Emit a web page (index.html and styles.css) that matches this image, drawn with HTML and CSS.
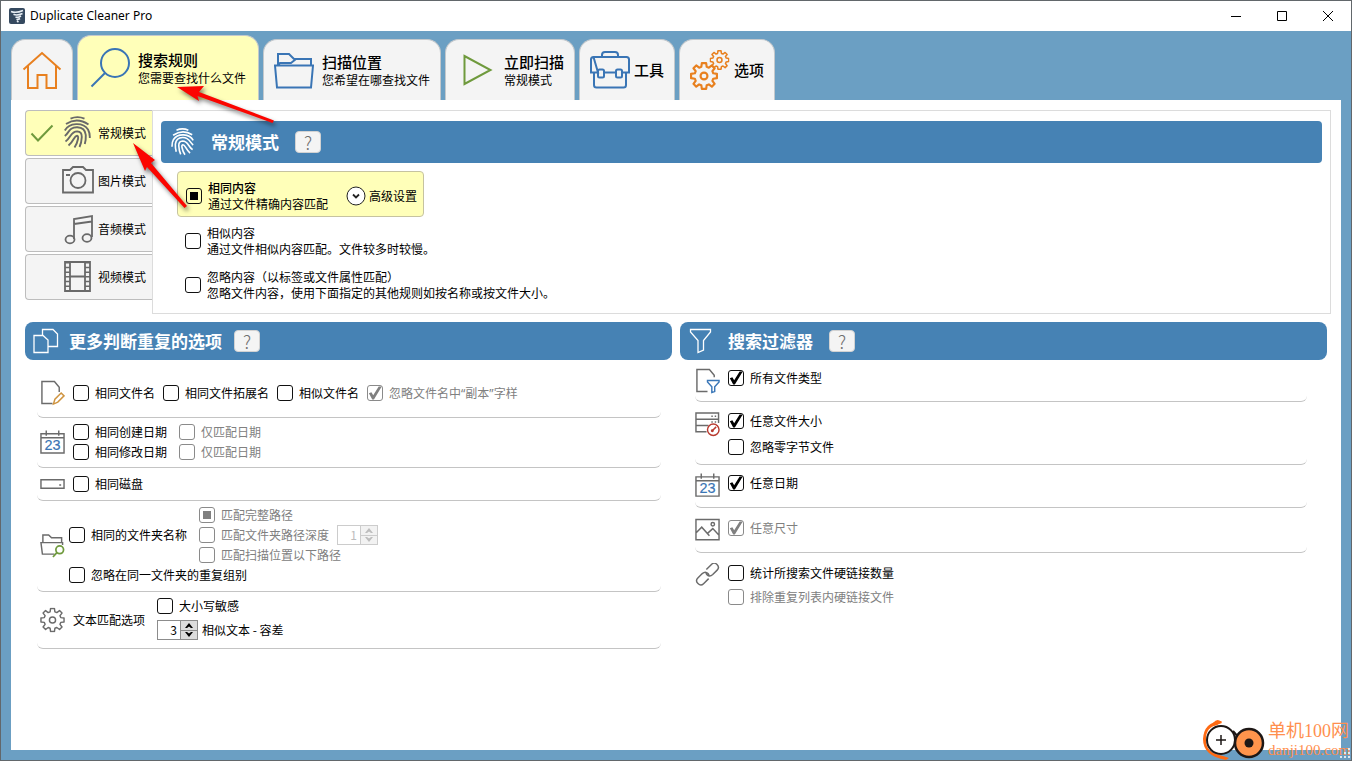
FILE: index.html
```html
<!DOCTYPE html>
<html lang="zh-CN">
<head>
<meta charset="utf-8">
<title>Duplicate Cleaner Pro</title>
<link rel="stylesheet" href="styles.css">
</head>
<body>
<svg class="defs" aria-hidden="true">
  <symbol id="print" viewBox="0 0 28 33">
    <g fill="none" stroke="currentColor" stroke-width="1.900">
      <path d="M6.500 2.600Q13.500 -.4 20.500 2.600"/>
      <path d="M2 8Q13 .8 24.500 8.500"/>
      <path d="M.8 14.500C5 6.500 19 5.800 24 13.500Q26 17 25.800 22"/>
      <path d="M.8 20C5 17 5 11 13.300 11.200Q21 11.500 21.800 19Q22 24 20.800 28"/>
      <path d="M1.500 25.500C7 22 6.500 15.500 13.200 15.400Q18 15.700 17.800 21Q17.500 27 15.500 31"/>
      <path d="M4.500 29.500C10 25 10 19.800 13 19.700Q14.600 20 14 23Q13 28 10.500 31.500"/>
    </g>
  </symbol>
  <symbol id="gear" viewBox="0 0 26 26">
    <path fill="none" stroke="currentColor" stroke-linejoin="round" d="M10.500 4.500L11 1H15L15.500 4.500L17.500 5.300L20.300 3.200L22.900 5.800L20.800 8.500L21.600 10.500L25 11V15L21.600 15.500L20.800 17.500L22.900 20.300L20.300 22.900L17.500 20.800L15.500 21.600L15 25H11L10.500 21.600L8.500 20.800L5.800 22.900L3.200 20.300L5.300 17.500L4.500 15.500L1 15V11L4.500 10.500L5.300 8.500L3.200 5.800L5.800 3.200L8.500 5.300Z"/>
    <circle cx="13" cy="13" r="3.200" fill="none" stroke="currentColor"/>
  </symbol>
  <symbol id="arrow" viewBox="0 0 8 5"><path d="M0 5L4 0L8 5L6 5L4 3.500L2 5Z" fill="currentColor"/></symbol>
</svg>

<header class="titlebar">
  <svg class="app-icon" viewBox="0 0 16 16" aria-hidden="true">
    <rect width="16" height="16" rx="2" fill="#35495f"/>
    <path d="M2 3.500Q7 5.500 14 2.500M4.500 6.300Q8 8 13.500 5.500M6.500 9Q9 10 12 8M7.500 11.200Q9 12 11 10.500M8 13L9.500 14" fill="none" stroke="#e8eef4" stroke-width="1.600"/>
  </svg>
  <h1>Duplicate Cleaner Pro</h1>
  <div class="window-buttons">
    <button type="button" aria-label="最小化"><svg viewBox="0 0 12 12"><path d="M1 6.500H11"/></svg></button>
    <button type="button" aria-label="最大化"><svg viewBox="0 0 12 12"><path d="M1.500 1.500H10.500V10.500H1.500Z"/></svg></button>
    <button type="button" aria-label="关闭"><svg viewBox="0 0 12 12"><path d="M1 1L11 11M11 1L1 11"/></svg></button>
  </div>
</header>

<nav class="tabs">
  <button type="button" class="tab home" aria-label="主页">
    <svg class="tab-icon orange" viewBox="0 0 40 40"><path d="M1.500 19.500L20 3L38.500 19.500M6 16V38H15.500V25H24.500V38H34V16"/></svg>
  </button>
  <button type="button" class="tab active">
    <svg class="tab-icon blue" viewBox="0 0 40 40"><circle cx="25" cy="15" r="14"/><path d="M15 25L1.500 38.500"/></svg>
    <span class="tab-text"><strong>搜索规则</strong><span>您需要查找什么文件</span></span>
  </button>
  <button type="button" class="tab">
    <svg class="tab-icon blue" viewBox="0 0 40 40"><path d="M1 15.500H39L37 37.500H3ZM4 15.500V4H15L20 9H37V15.500M4 15.500L6 13H17L22 9"/></svg>
    <span class="tab-text"><strong>扫描位置</strong><span>您希望在哪查找文件</span></span>
  </button>
  <button type="button" class="tab">
    <svg class="tab-icon green" viewBox="0 0 40 40"><path d="M8.500 6V34L34.500 20Z"/></svg>
    <span class="tab-text"><strong>立即扫描</strong><span>常规模式</span></span>
  </button>
  <button type="button" class="tab compact">
    <svg class="tab-icon blue" viewBox="0 0 40 40"><path d="M12 7V5Q12 2 15 2H25Q28 2 28 5V7M3.500 7H36.500Q39 7 39 9.500V22.500H32M25.500 22.500H14.500M8 22.500H1V9.500Q1 7 3.500 7ZM4 22.500V35Q4 37.500 6.500 37.500H33.500Q36 37.500 36 35V22.500"/><rect x="8" y="19.500" width="6" height="8" rx="1.500"/><rect x="26" y="19.500" width="6" height="8" rx="1.500"/></svg>
    <strong>工具</strong>
  </button>
  <button type="button" class="tab compact">
    <svg class="tab-icon orange" viewBox="0 0 40 40"><use href="#gear" x="0" y="12" width="28" height="28"/><use href="#gear" x="19.500" y="0" width="20" height="20"/></svg>
    <strong>选项</strong>
  </button>
</nav>

<main class="content">
  <section class="modes">
    <div class="mode-list">
      <button type="button" class="mode active">
        <svg class="tick" viewBox="0 0 24 18" aria-hidden="true"><path d="M1.500 9.500L8 16.500L22.500 1.500"/></svg>
        <svg class="mode-icon" viewBox="0 0 32 34"><use href="#print" x="2" width="28" height="33"/></svg>
        <span>常规模式</span>
      </button>
      <button type="button" class="mode">
        <svg class="mode-icon line" viewBox="0 0 32 34"><path d="M1 6H8L11 3H21L24 6H31V28.500H1ZM4 11H8"/><circle cx="16" cy="16.500" r="7.500"/></svg>
        <span>图片模式</span>
      </button>
      <button type="button" class="mode">
        <svg class="mode-icon line" viewBox="0 0 32 34"><path d="M12 27V7L30 4V25M12 12L30 9.500"/><ellipse cx="8" cy="27.500" rx="4.500" ry="3.800"/><ellipse cx="25" cy="26" rx="4.500" ry="3.800"/></svg>
        <span>音频模式</span>
      </button>
      <button type="button" class="mode">
        <svg class="mode-icon line" viewBox="0 0 32 34"><path d="M3 2H28V31H3ZM8 2V31M23 2V31M8 16.500H23"/><path stroke-width="5" stroke-dasharray="1.500 3.200" d="M5.500 2V31M25.500 2V31"/></svg>
        <span>视频模式</span>
      </button>
    </div>
    <div class="mode-panel">
      <div class="bar mode-bar">
        <svg class="bar-icon mirrored" viewBox="0 0 28 33"><use href="#print" width="28" height="33"/></svg>
        <h2>常规模式</h2>
        <button type="button" class="help" aria-label="帮助">?</button>
      </div>
      <div class="match-options">
        <div class="match selected">
          <label class="match-label"><input type="checkbox" class="square"><span><b>相同内容</b><br>通过文件精确内容匹配</span></label>
          <button type="button" class="advanced"><svg viewBox="0 0 20 20" aria-hidden="true"><circle cx="10" cy="10" r="9" fill="#fff" stroke="#222"/><path d="M7 8.500L10 11.500L13 8.500" fill="none" stroke="#222" stroke-width="1.800"/></svg>高级设置</button>
        </div>
        <label class="match match-label"><input type="checkbox"><span>相似内容<br>通过文件相似内容匹配。文件较多时较慢。</span></label>
        <label class="match match-label"><input type="checkbox"><span>忽略内容（以标签或文件属性匹配）<br>忽略文件内容，使用下面指定的其他规则如按名称或按文件大小。</span></label>
      </div>
    </div>
  </section>

  <div class="columns">
    <section class="criteria">
      <div class="bar">
        <svg class="bar-icon" viewBox="0 0 26 26"><path d="M1 7.500H10L15 12V24.500H1ZM9.500 7V1.500H20L24.500 6V18.500H15.500"/></svg>
        <h2>更多判断重复的选项</h2>
        <button type="button" class="help" aria-label="帮助">?</button>
      </div>
      <div class="group names">
        <svg class="row-icon" viewBox="0 0 26 26"><path d="M20 12V7L15 1H2V24H13"/><path d="M14 24.500L15.500 19.500L22 13L25 16L18.500 22.500Z" stroke="#cf9440"/></svg>
        <label><input type="checkbox">相同文件名</label>
        <label><input type="checkbox">相同文件拓展名</label>
        <label><input type="checkbox">相似文件名</label>
        <label><input type="checkbox" checked disabled><span>忽略文件名中<span class="quoted">“副本”</span>字样</span></label>
      </div>
      <div class="group dates">
        <svg class="row-icon" viewBox="0 0 26 26"><path d="M1 4.500H25V24.500H1ZM1 8.500H25M6.500 1V6.500M19.500 1V6.500"/><text x="13" y="21" text-anchor="middle" class="cal-num">23</text></svg>
        <div class="date-grid">
          <label><input type="checkbox">相同创建日期</label>
          <label><input type="checkbox" disabled>仅匹配日期</label>
          <label><input type="checkbox">相同修改日期</label>
          <label><input type="checkbox" disabled>仅匹配日期</label>
        </div>
      </div>
      <div class="group disk">
        <svg class="row-icon flat" viewBox="0 0 26 20"><path d="M1 5.500H25V14.500H1ZM20 11H22"/></svg>
        <label><input type="checkbox">相同磁盘</label>
      </div>
      <div class="group folders">
        <svg class="row-icon" viewBox="0 0 26 26"><path d="M15 22.500H2.500L1 10.500H23.500V13M3 10.500V2.500H9L12 5.500H22.500V10.500"/><g stroke="#6f9a3d" stroke-width="1.800"><circle cx="20.500" cy="18" r="4"/><path d="M17.500 21L13.500 25.500"/></g></svg>
        <div class="stack">
          <div class="folder-line">
            <label><input type="checkbox">相同的文件夹名称</label>
            <div class="stack">
              <label><input type="checkbox" class="square" disabled>匹配完整路径</label>
              <div class="inline">
                <label><input type="checkbox" disabled>匹配文件夹路径深度</label>
                <span class="spinner off">
                  <input type="text" value="1" aria-label="路径深度" disabled>
                  <span class="steps"><button type="button" aria-label="增加" disabled><svg viewBox="0 0 8 5"><use href="#arrow" width="8" height="5"/></svg></button><button type="button" class="down" aria-label="减少" disabled><svg viewBox="0 0 8 5"><use href="#arrow" width="8" height="5"/></svg></button></span>
                </span>
              </div>
              <label><input type="checkbox" disabled>匹配扫描位置以下路径</label>
            </div>
          </div>
          <label><input type="checkbox">忽略在同一文件夹的重复组别</label>
        </div>
      </div>
      <div class="group texts">
        <svg class="row-icon" viewBox="0 0 26 26"><use href="#gear" width="26" height="26"/></svg>
        <span class="caption">文本匹配选项</span>
        <div class="stack spaced">
          <label><input type="checkbox">大小写敏感</label>
          <div class="inline near">
            <span class="spinner">
              <input type="text" value="3" id="tolerance">
              <span class="steps"><button type="button" aria-label="增加"><svg viewBox="0 0 8 5"><use href="#arrow" width="8" height="5"/></svg></button><button type="button" class="down" aria-label="减少"><svg viewBox="0 0 8 5"><use href="#arrow" width="8" height="5"/></svg></button></span>
            </span>
            <label for="tolerance">相似文本 - 容差</label>
          </div>
        </div>
      </div>
    </section>

    <section class="filters">
      <div class="bar">
        <svg class="bar-icon" viewBox="0 0 26 26"><path d="M2.500 1.500H22.500V4L15.500 12.500V22L10 24.500V12.500L2.500 4Z"/></svg>
        <h2>搜索过滤器</h2>
        <button type="button" class="help" aria-label="帮助">?</button>
      </div>
      <div class="group types">
        <svg class="row-icon" viewBox="0 0 26 26"><path d="M20 9V7L15 1H2V24H13"/><path d="M13 12.500H25V14L20.500 19V24L17.500 25V19L13 14Z" stroke="#3a77b8"/></svg>
        <label><input type="checkbox" checked>所有文件类型</label>
      </div>
      <div class="group sizes">
        <svg class="row-icon" viewBox="0 0 26 26"><path d="M12 21H1V1.500H24.500V12M1 8H24.500M1 14.500H14M17 5H18.500M20.500 5H22M17 11H18.500M20.500 11H22"/><g stroke="#b83a2f"><circle cx="19" cy="19" r="6"/><path d="M18.500 19.500L22 16"/><circle cx="18" cy="20" r=".8"/></g></svg>
        <div class="stack wide">
          <label><input type="checkbox" checked>任意文件大小</label>
          <label><input type="checkbox">忽略零字节文件</label>
        </div>
      </div>
      <div class="group anydate">
        <svg class="row-icon" viewBox="0 0 26 26"><path d="M1 3.500H25V23.500H1ZM1 7.500H25M6.500 0V5.500M19.500 0V5.500"/><text x="13" y="20" text-anchor="middle" class="cal-num">23</text></svg>
        <label><input type="checkbox" checked>任意日期</label>
      </div>
      <div class="group dims">
        <svg class="row-icon" viewBox="0 0 26 26"><path d="M1 1H25V22H1ZM1 15L7 9L15 18M13 15.500L18.500 10.500L25 17.500"/><circle cx="18.500" cy="6" r="1.800"/></svg>
        <label><input type="checkbox" checked disabled>任意尺寸</label>
      </div>
      <div class="group links">
        <svg class="row-icon" viewBox="0 0 26 26"><g transform="rotate(-45 13 11)"><path d="M10.500 15.200H3Q-1 15.200 -1 11T3 6.800H9.500Q13.800 7 13.800 11Q13.800 12 13.200 13"/><path d="M15.500 6.800H23Q27 6.800 27 11T23 15.200H16.500Q12.200 15 12.200 11Q12.200 10 12.800 9"/></g></svg>
        <div class="stack spaced">
          <label><input type="checkbox">统计所搜索文件硬链接数量</label>
          <label><input type="checkbox" disabled>排除重复列表内硬链接文件</label>
        </div>
      </div>
    </section>
  </div>
</main>

<svg class="pointers" width="300" height="230" viewBox="0 0 300 230" aria-hidden="true">
  <g fill="#fb0500">
    <path d="M177 87L204 86L199 92L274 120.500L272.500 123L197.500 96L199 101Z"/>
    <path d="M133 143L155 160L151 163L187 206L184.500 208L147 167L145 171Z"/>
  </g>
</svg>

<div class="watermark">
  <svg viewBox="0 0 66 44" aria-hidden="true">
    <path d="M20 3Q3 4 2 21Q2 38 25 42L28 40L22 38Q4 35 5 21Q5 9 16 7L21 4Z" fill="#ff6a13"/>
    <path d="M12 5Q17-1 21 5L12 8Z" fill="#ff6a13"/>
    <circle cx="20" cy="22" r="14" fill="#fff" stroke="#1d1716" stroke-width="2"/>
    <path d="M15 22H25M20 17V27" stroke="#1d1716" stroke-width="1.500"/>
    <path d="M32 13L38 20L41 13" fill="none" stroke="#1d1716" stroke-width="2"/>
    <circle cx="48" cy="25" r="14" fill="#ff944c" stroke="#1d1716" stroke-width="2.500"/>
    <circle cx="48" cy="25" r="4.500" fill="#1d1716"/>
  </svg>
  <p><span class="wm-name">单机100网</span><span class="wm-site">danji100.com</span></p>
</div>
<svg class="grip" viewBox="0 0 12 12" aria-hidden="true"><path d="M9 1h2v2H9zM5 5h2v2H5zM9 5h2v2H9zM1 9h2v2H1zM5 9h2v2H5zM9 9h2v2H9z" fill="#dfe9f0"/></svg>
</body>
</html>
```
FILE: styles.css
```css
* { box-sizing: border-box; }

body {
  margin: 0;
  min-height: 100vh;
  display: flex;
  flex-direction: column;
  position: relative;
  overflow: hidden;
  border: 1px solid #62676b;
  background: #6b9fc3;
  color: #000;
  font: 12px/16px "Noto Sans CJK SC", "Noto Sans", sans-serif;
}

h1, h2, p { margin: 0; }
button, input { font: inherit; color: inherit; }
button { padding: 0; border: 0; background: none; }
svg { display: block; flex: none; }
.defs { position: absolute; width: 0; height: 0; }

.titlebar {
  display: flex;
  align-items: center;
  gap: 5px;
  height: 30px;
  padding-left: 8px;
  background: #fff;
}
.app-icon { width: 16px; height: 16px; }
.titlebar h1 { flex: 1; font-family: "Noto Sans", sans-serif; font-size: 12px; font-weight: 400; }
.window-buttons { display: flex; }
.window-buttons button { width: 46px; height: 30px; display: grid; place-items: center; }
.window-buttons svg { width: 12px; height: 12px; fill: none; stroke: #000; }

.tabs {
  display: flex;
  align-items: flex-end;
  gap: 4px;
  height: 69px;
  padding-left: 10px;
}
.tab {
  display: flex;
  align-items: center;
  gap: 8px;
  height: 61px;
  padding: 0 10px 1px;
  border: 1px solid #c3c8cc;
  border-bottom: 0;
  border-radius: 14px 14px 0 0;
  background: #f4f4f4;
  text-align: left;
}
.tab.active { height: 65px; padding: 0 12px 1px; background: #ffffb9; }
.tab.compact { gap: 4px; }
.tab strong { font-size: 15px; line-height: 20px; font-weight: 500; }
.tab-text { display: flex; flex-direction: column; }
.tab-icon { width: 40px; height: 40px; fill: none; stroke: currentColor; stroke-width: 2; }
.orange { color: #e8801f; }
.blue { color: #3a75b5; }
.green { color: #6f9a3d; }

.content {
  flex: 1;
  margin: 0 10px 10px;
  padding: 10px 10px 0 14px;
  background: #fff;
}
.modes { display: flex; }
.mode-list { display: flex; flex-direction: column; gap: 2px; width: 127px; }
.mode {
  display: flex;
  align-items: center;
  justify-content: flex-end;
  gap: 4px;
  height: 46px;
  padding-right: 6px;
  border: 1px solid #bdbdbd;
  border-right: 0;
  border-radius: 4px 0 0 4px;
  background: #f4f4f4;
}
.mode.active { background: #ffffb9; }
.tick { width: 24px; height: 18px; margin-right: 4px; fill: none; stroke: #6f9a3d; stroke-width: 2; }
.mode-icon { width: 32px; height: 34px; color: #696969; }
.line { fill: none; stroke: currentColor; stroke-width: 1.8; }
.mode-panel {
  flex: 1;
  padding: 10px 8px 12px;
  border: 1px solid #dcdcdc;
}

.bar {
  display: flex;
  align-items: center;
  height: 38px;
  padding-left: 8px;
  border-radius: 8px;
  background: #4682b4;
  color: #fff;
}
.mode-bar { height: 42px; border-radius: 4px; }
.bar h2 { margin: 0 16px; font-size: 17px; line-height: 24px; font-weight: 700; }
.bar-icon { width: 26px; height: 26px; fill: none; stroke: #fff; stroke-width: 1.3; }
.mode-bar .bar-icon { height: 28px; }
.criteria .bar h2 { margin: 0 12px 0 10px; }
.filters .bar h2 { margin-left: 14px; }
.mirrored { transform: scaleX(-1); }
.help {
  width: 26px;
  height: 22px;
  border: 1px solid #d2d2d2;
  border-radius: 4px;
  background: #f4f4f4;
  color: #707070;
  font-size: 18px;
  font-weight: 300;
  line-height: 20px;
}

.match-options { display: flex; flex-direction: column; align-items: flex-start; gap: 12px; padding: 8px 16px 0; }
.match { padding-left: 8px; }
.match.selected {
  display: flex;
  align-items: center;
  gap: 18px;
  margin-bottom: -4px;
  padding: 8px 6px 4px 8px;
  border: 1px solid #c6c3a0;
  border-radius: 4px;
  background: #ffffb9;
}
.match-label { line-height: 16px; }
.match b { font-weight: 500; }
.advanced { display: flex; align-items: center; gap: 3px; }
.advanced svg { width: 20px; height: 20px; }

label { display: flex; align-items: center; gap: 6px; white-space: nowrap; }
.group label { height: 20px; }
label:has(input:disabled) { color: #808080; }
.quoted { font-family: "Noto Sans", "Noto Sans CJK SC", sans-serif; }
input[type="checkbox"] {
  appearance: none;
  flex: none;
  display: grid;
  place-items: center;
  width: 16px;
  height: 16px;
  margin: 0;
  border: 1px solid #111;
  border-radius: 3px;
  background: #fff;
  color: #000;
}
input[type="checkbox"]:disabled { border-color: #8a8a8a; color: #808080; }
input[type="checkbox"].square { background: transparent; }
input.square::before { content: ""; width: 8px; height: 8px; background: currentColor; }
input[type="checkbox"]:checked::before {
  content: "";
  width: 14px;
  height: 14px;
  background: currentColor;
  clip-path: polygon(6% 52%, 24% 44%, 37% 66%, 76% 4%, 98% 4%, 42% 96%, 30% 96%);
}

.columns { display: grid; grid-template-columns: 1fr 1fr; gap: 8px; padding: 8px 4px 0 0; }
.group {
  display: flex;
  align-items: center;
  gap: 8px;
  margin: 0 11px 0 12px;
  padding-left: 3px;
  border-bottom: 1px solid #c4c4c4;
  border-radius: 0 0 6px 6px;
}
.row-icon { width: 25px; height: 26px; fill: none; stroke: #6b6b6b; stroke-width: 1.5; color: #6b6b6b; }
.row-icon.flat { height: 20px; }
.cal-num { font: 15px "Liberation Sans", sans-serif; fill: #3a75b5; stroke: #3a75b5; stroke-width: 0.2; }
.stack { display: flex; flex-direction: column; }
.spaced { gap: 4px; }
.wide { gap: 6px; }
.inline { display: flex; align-items: center; gap: 8px; }
.inline.near { gap: 4px; }

.names { padding-top: 20px; padding-bottom: 11px; }
.dates { padding-top: 4px; padding-bottom: 5px; }
.date-grid { display: grid; grid-template-columns: auto auto; column-gap: 12px; }
.disk { padding-top: 6px; padding-bottom: 6px; }
.folders { gap: 4px; padding-top: 4px; padding-bottom: 6px; }
.folder-line { display: flex; align-items: center; gap: 12px; }
.texts { padding-top: 4px; padding-bottom: 8px; }
.texts .row-icon, .caption { margin-top: 4px; }
.caption { margin-right: 4px; }

.filters .group { align-items: flex-start; margin: 0 20px 0 15px; padding-left: 0; }
.filters .types { padding-top: 8px; padding-bottom: 7px; }
.filters .sizes { padding-top: 9px; padding-bottom: 7px; }
.filters .anydate { padding-top: 8px; padding-bottom: 8px; }
.filters .dims { padding-top: 10px; padding-bottom: 8px; }
.filters .links { padding-top: 10px; border-bottom: 0; }

.spinner { display: flex; width: 41px; height: 20px; border: 1px solid #8c8c8c; background: #fff; }
.spinner input { width: 22px; padding: 0 3px 0 0; border: 0; background: none; text-align: right; }
.steps { flex: 1; display: flex; flex-direction: column; background: #dcdcdc; border-left: 1px solid #8c8c8c; }
.steps button { flex: 1; display: grid; place-items: center; }
.steps button + button { border-top: 1px solid #8c8c8c; }
.steps svg { width: 8px; height: 5px; }
.down svg { transform: rotate(180deg); }
.spinner.off, .off .steps, .off .steps button { border-color: #cccccc; color: #bdbdbd; }
.off .steps { background: #f2f2f2; }
.off input { color: #bdbdbd; }

.pointers {
  position: absolute;
  left: -1px;
  top: -1px;
  pointer-events: none;
  filter: drop-shadow(2px 3px 2px rgba(0, 0, 0, 0.5));
}
.watermark {
  position: absolute;
  right: 2px;
  bottom: -2px;
  display: flex;
  align-items: center;
  gap: 1px;
  color: #ff8f4e;
  white-space: nowrap;
}
.watermark svg { width: 66px; height: 44px; }
.watermark p { display: flex; flex-direction: column; width: 81px; }
.wm-name { font: 18px/20px "Liberation Serif", "Noto Sans CJK SC", serif; }
.wm-site { font: 15px/18px "Liberation Serif", serif; }
.grip { position: absolute; right: 0; bottom: 1px; width: 12px; height: 12px; }
```
